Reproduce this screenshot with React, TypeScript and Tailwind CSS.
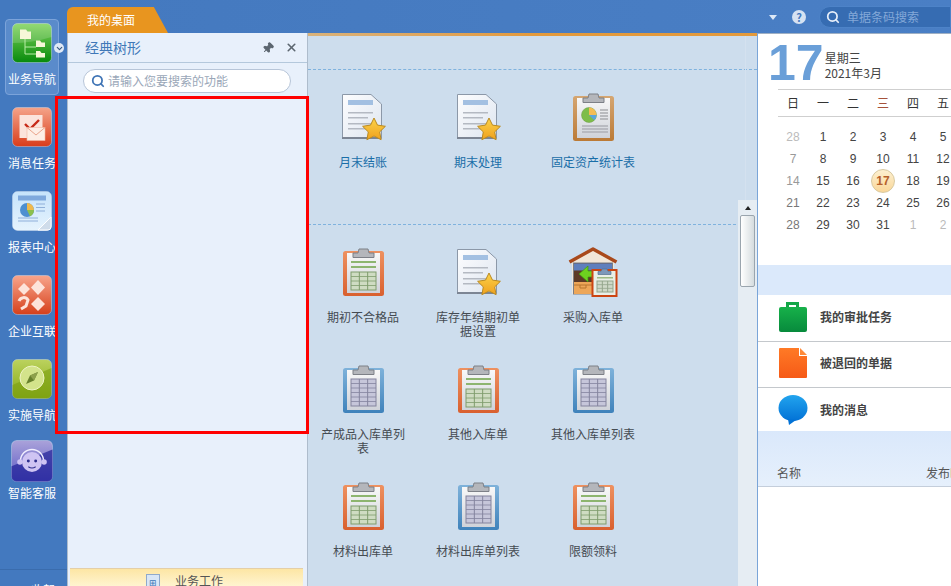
import React from 'react';
import { ChevronDown, Pin, Search, X } from 'lucide-react';

const FONT = '"Noto Sans CJK SC", "Liberation Sans", sans-serif';

type ClipKind = 'blue' | 'orange' | 'tan';

// Star in the corner of the document icons
const Star = ({ cx, cy, r, id }: { cx: number; cy: number; r: number; id: string }) => {
  const points = Array.from({ length: 10 }, (_, i) => {
    const a = (Math.PI / 5) * i - Math.PI / 2;
    const rr = i % 2 === 0 ? r : r * 0.5;
    return `${(cx + rr * Math.cos(a)).toFixed(1)},${(cy + rr * Math.sin(a)).toFixed(1)}`;
  }).join(' ');
  return (
    <>
      <defs>
        <linearGradient id={id} x1="0" y1="0" x2="0" y2="1">
          <stop offset="0" stopColor="#fbd34a" />
          <stop offset="1" stopColor="#f0a11e" />
        </linearGradient>
      </defs>
      <polygon points={points} fill={`url(#${id})`} stroke="#b98a22" strokeWidth="1" strokeLinejoin="round" />
    </>
  );
};

const DocIcon = () => (
  <svg width="48" height="48" viewBox="0 0 48 48">
    <defs>
      <linearGradient id="doc-paper" x1="0" y1="0" x2="1" y2="1">
        <stop offset="0" stopColor="#fdfdfe" />
        <stop offset="1" stopColor="#dde5f0" />
      </linearGradient>
    </defs>
    <path d="M3.5 1.5H32L42.5 11V45.5H3.5Z" fill="url(#doc-paper)" stroke="#8c98a8" />
    <rect x="3" y="44" width="36" height="2" fill="#7c8594" />
    <rect x="9" y="7" width="25" height="5" fill="#a3c0e2" />
    <rect x="9" y="19" width="25" height="1.5" fill="#b4b9c2" />
    <rect x="9" y="24" width="20" height="1.5" fill="#b4b9c2" />
    <rect x="9" y="30" width="25" height="1.5" fill="#b4b9c2" />
    <rect x="9" y="35" width="18" height="1.5" fill="#b4b9c2" />
    <Star cx={35} cy={37} r={12} id="doc-star" />
  </svg>
);

const ClipTable = ({ x, y, w, h, fill, line, rows }: { x: number; y: number; w: number; h: number; fill: string; line: string; rows: number }) => (
  <g>
    <rect x={x} y={y} width={w} height={h} fill={fill} stroke={line} />
    <path d={`M${x + w / 3} ${y}V${y + h}M${x + (2 * w) / 3} ${y}V${y + h}`} stroke={line} />
    {Array.from({ length: rows - 1 }, (_, i) => (
      <path key={i} d={`M${x} ${y + (h / rows) * (i + 1)}H${x + w}`} stroke={line} strokeWidth="0.8" />
    ))}
  </g>
);

const ClipboardIcon = ({ kind }: { kind: ClipKind }) => {
  const colors: Record<ClipKind, [string, string]> = {
    blue: ['#7fb2da', '#3f82bb'],
    orange: ['#ee9160', '#d9602f'],
    tan: ['#d5a672', '#bb7a36'],
  };
  const id = `clip-${kind}`;
  return (
    <svg width="48" height="48" viewBox="0 0 48 48">
      <defs>
        <linearGradient id={id} x1="0" y1="0" x2="0" y2="1">
          <stop offset="0" stopColor={colors[kind][0]} />
          <stop offset="1" stopColor={colors[kind][1]} />
        </linearGradient>
        <linearGradient id="clip-paper" x1="0" y1="0" x2="0" y2="1">
          <stop offset="0" stopColor="#f8f8f8" />
          <stop offset="1" stopColor="#cfd2d9" />
        </linearGradient>
      </defs>
      <rect x="4" y="3" width="41" height="45" rx="2.5" fill={`url(#${id})`} />
      <rect x="8" y="5" width="33" height="40" fill="url(#clip-paper)" />
      <path d="M14 9.5V5H19L20 1H29L30 5H35V9.5Z" fill="#b4b6bb" stroke="#7d8087" />
      {kind === 'blue' && <ClipTable x={12} y={14} w={25} h={27} fill="#c6c6da" line="#84849e" rows={6} />}
      {kind === 'orange' && (
        <>
          <rect x="12" y="13" width="25" height="2" fill="#8db56f" />
          <rect x="12" y="18" width="25" height="2" fill="#8db56f" />
          <ClipTable x={12} y={24} w={25} h={18} fill="#cfdcc2" line="#7f9c6c" rows={4} />
        </>
      )}
      {kind === 'tan' && (
        <>
          <circle cx="20" cy="22" r="7.5" fill="#7ebd4a" stroke="#6a9a44" strokeWidth="0.5" />
          <path d="M20 22V14.5A7.5 7.5 0 0 1 27.5 22Z" fill="#f3bd55" />
          <path d="M20 22H27.5A7.5 7.5 0 0 1 25.3 27.3Z" fill="#5aa6dc" />
          <path d="M31 17H39M31 20H39M31 23H39M31 26H39" stroke="#8b8d92" strokeWidth="1.2" />
          <path d="M13 33H39M13 36H39M13 39H39" stroke="#aeb0b7" strokeWidth="1.4" />
        </>
      )}
    </svg>
  );
};

const HouseIcon = () => (
  <svg width="50" height="50" viewBox="0 0 50 50">
    <path d="M4 15L25 3L46 15V47H4Z" fill="#f1e6d8" />
    <path d="M1.5 15L25 2L48.5 15" fill="none" stroke="#a9491b" strokeWidth="3.4" strokeLinejoin="round" />
    <rect x="5.5" y="16" width="39" height="31" fill="#5d3a26" stroke="#7d7f84" />
    <rect x="6" y="16.5" width="38" height="7" fill="#5f7fbd" />
    <rect x="6" y="35" width="18" height="12" fill="#eda658" />
    <path d="M6 38H24M12 38V41H18V38" stroke="#b8752f" fill="none" />
    <path d="M11 27L20 19V24H28V30H20V35Z" fill="#6ed21f" stroke="#3d9a12" strokeWidth="0.7" />
    <rect x="24.5" y="23" width="24" height="26" fill="#e9efe7" stroke="#cc4512" strokeWidth="2" />
    <path d="M30 27.5V24.5H33L34 22H39L40 24.5H43V27.5Z" fill="#7c98ba" stroke="#55708f" strokeWidth="0.7" />
    <rect x="29" y="30" width="16" height="1.5" fill="#9cba84" />
    <ClipTable x={29} y={34} w={16} h={11} fill="#cfd9c8" line="#93a58b" rows={3} />
  </svg>
);

// The six launcher icons on the blue rail
const RailTile = ({ id, from, to, size = 40, children }: { id: string; from: string; to: string; size?: number; children: React.ReactNode }) => (
  <svg width={size} height={size} viewBox="0 0 40 40">
    <defs>
      <linearGradient id={id} x1="0" y1="0" x2="0" y2="1">
        <stop offset="0" stopColor={from} />
        <stop offset="1" stopColor={to} />
      </linearGradient>
    </defs>
    <rect x="0.5" y="0.5" width="39" height="39" rx="5" fill={`url(#${id})`} stroke="#d7e3f2" strokeOpacity="0.4" />
    {children}
  </svg>
);

const TreeIcon = () => (
  <RailTile id="rail-tree" from="#7fd35a" to="#078a0c">
    <path d="M0.5 5A5 5 0 0 1 5 .5H35A5 5 0 0 1 39.5 5V14C26 18 14 20 .5 20Z" fill="#ffffff" opacity="0.16" />
    <path d="M8 6.5H14L15.5 8.5H19V16H8Z" fill="#f6f7d8" />
    <path d="M13 16V31H24M13 24H24" stroke="#b9eda6" strokeWidth="1" fill="none" />
    <path d="M24 17.5H28L29.5 19.5H33V24H24Z" fill="#f6f7d8" />
    <path d="M24 28H28L29.5 30H33V34.5H24Z" fill="#f6f7d8" />
  </RailTile>
);

const MessageIcon = () => (
  <RailTile id="rail-msg" from="#f5a48a" to="#d93c1a">
    <rect x="7.5" y="8" width="23" height="23" fill="#fbe4dc" />
    <path d="M13 17L18 22L27 13" stroke="#c72a18" strokeWidth="2.4" fill="none" />
    <rect x="15" y="20.5" width="18" height="13" fill="#fdeee6" stroke="#f1b7a2" strokeWidth="0.6" />
    <path d="M15 20.5L24 28L33 20.5" stroke="#e9a48c" fill="none" />
  </RailTile>
);

const ReportIcon = () => (
  <RailTile id="rail-report" from="#c6e3fb" to="#e6f3fd">
    <rect x="6" y="4.5" width="28" height="5" fill="#7fa9dd" />
    <circle cx="15" cy="19" r="7" fill="#4d8fd0" />
    <path d="M15 19V12A7 7 0 0 1 22 19Z" fill="#f0b94c" />
    <path d="M15 19H22A7 7 0 0 1 18 25.3Z" fill="#8cc04d" />
    <path d="M24 13H33M24 16.5H33M24 20H33M6 27H26M6 30H26" stroke="#8fb0d9" strokeWidth="1.2" />
    <path d="M26 39L39 26V36A3 3 0 0 1 36 39Z" fill="#cfdcea" stroke="#fff" />
  </RailTile>
);

const LinkIcon = () => (
  <RailTile id="rail-link" from="#f8a58c" to="#d6401b">
    <path d="M12 8L18 14L12 20L6 14Z" fill="#fde3da" />
    <path d="M26 5L33 12.5L26 20L19 12.5Z" fill="#fde3da" />
    <path d="M26 22L33 29L26 36L19 29Z" fill="#fde3da" />
    <path d="M7 26A5 5 0 0 1 16 25L14 31L9 34" stroke="#fde3da" strokeWidth="3" fill="none" />
  </RailTile>
);

const CompassIcon = () => (
  <RailTile id="rail-compass" from="#bcd25e" to="#84a912">
    <path d="M.5 26L39.5 9V35A4.5 4.5 0 0 1 35 39.5H5A4.5 4.5 0 0 1 .5 35Z" fill="#7c9f10" opacity="0.6" />
    <circle cx="20" cy="19" r="12" fill="#d3e38b" stroke="#eef4c4" />
    <path d="M26 13L22 21.5L14 25L18 16.5Z" fill="#667f2b" />
    <path d="M26 13L18 16.5L22 21.5Z" fill="#8da04c" />
  </RailTile>
);

const ServiceIcon = () => (
  <RailTile id="rail-service" from="#aaa2da" to="#5a58c4" size={42}>
    <path d="M.5 25L39.5 9V35A4.5 4.5 0 0 1 35 39.5H5A4.5 4.5 0 0 1 .5 35Z" fill="#1f1f97" opacity="0.7" />
    <path d="M9 20A11 11 0 0 1 31 20" stroke="#f1efff" strokeWidth="1.4" fill="none" />
    <circle cx="20" cy="21" r="9.5" fill="#cfc4f3" />
    <circle cx="8.5" cy="21" r="2.6" fill="#cfc4f3" />
    <circle cx="31.5" cy="21" r="2.6" fill="#cfc4f3" />
    <circle cx="16.5" cy="20" r="1.4" fill="#2f2f8d" />
    <circle cx="23.5" cy="20" r="1.4" fill="#2f2f8d" />
    <path d="M16.5 25.5Q20 28 23.5 25.5" stroke="#2f2f8d" fill="none" />
  </RailTile>
);

const railItems = [
  { label: '消息任务', icon: <MessageIcon /> },
  { label: '报表中心', icon: <ReportIcon /> },
  { label: '企业互联', icon: <LinkIcon /> },
  { label: '实施导航', icon: <CompassIcon /> },
];

const Rail = () => (
  <div className="relative flex h-full w-[67px] shrink-0 flex-col bg-[#4379bf] pt-[19px] text-white">
    {/* 当前选中 */}
    <div className="mb-[8px] ml-[5px] flex h-[76px] w-[54px] flex-col items-center rounded border border-[#7ba3da] bg-[#5a8bcb] pt-[3px]">
      <TreeIcon />
      <span className="mt-[9px] text-[12px] leading-[14px] whitespace-nowrap">业务导航</span>
    </div>
    {railItems.map((item) => (
      <div key={item.label} className="mb-[8px] ml-[5px] flex h-[76px] w-[54px] flex-col items-center pt-[4px]">
        {item.icon}
        <span className="mt-[9px] text-[12px] leading-[14px] whitespace-nowrap">{item.label}</span>
      </div>
    ))}
    <div className="-mt-[3px] ml-[5px] flex w-[54px] flex-col items-center pt-[4px]">
      <ServiceIcon />
      <span className="mt-[4px] text-[12px] leading-[14px] whitespace-nowrap">智能客服</span>
    </div>
    <span className="absolute top-[43px] left-[54px] flex h-[10px] w-[10px] items-center justify-center rounded-full bg-[#dfe9f6]">
      <ChevronDown size={9} strokeWidth={3} className="text-[#35587f]" />
    </span>
    <div className="mt-auto flex h-[17px] gap-[10px] overflow-hidden border-t border-[#3a6cad] pt-[13px] pl-[11px] text-[12px] leading-[14px]">
      <span>✦</span>
      <span>收起</span>
    </div>
  </div>
);

const TopBar = () => (
  <div className="flex h-[33px] shrink-0 bg-gradient-to-r from-[#4479bf] to-[#4a7fc5]">
    <div className="mt-[7px] flex h-[26px] w-[101px] items-center rounded-tl-[6px] bg-[#e8951f] pl-[20px] text-[12px] text-white [clip-path:polygon(0_0,86%_0,100%_100%,0_100%)]">
      我的桌面
    </div>
    <div className="ml-auto flex items-start">
      <span className="mt-[15px] h-0 w-0 border-x-[4px] border-t-[5px] border-x-transparent border-t-[#dce8f7]" />
      <span className="mt-[10px] ml-[15px] flex h-[14px] w-[14px] items-center justify-center rounded-full bg-[#d6e2f2] text-[11px] leading-none font-bold text-[#4479bf]">?</span>
      <div className="mt-[6px] ml-[13px] flex h-[22px] w-[132px] items-center rounded-l-full border border-[#4d83c8] bg-[#366cb2] pl-[6px]">
        <Search size={14} strokeWidth={3} className="text-[#e6eef9]" />
        <span className="ml-[7px] text-[12px] whitespace-nowrap text-[#83a8d8]">单据条码搜索</span>
      </div>
    </div>
  </div>
);

const TreePanel = () => (
  <div className="flex w-[241px] shrink-0 flex-col border-x border-[#aebccc] bg-[#e8f0fb]">
    <div className="flex h-[30px] shrink-0 items-center border-b border-[#b4c8dc] pl-[17px]">
      <span className="text-[14px] text-[#3f78b8]">经典树形</span>
      <Pin size={12} fill="#5c6670" className="ml-auto rotate-45 text-[#5c6670]" />
      <X size={13} strokeWidth={3} className="mr-[9px] ml-[11px] text-[#5c6670]" />
    </div>
    <div className="mt-[6px] ml-[15px] flex h-[24px] w-[208px] items-center rounded-full border border-[#b7c5d8] bg-white pl-[7px]">
      <Search size={14} strokeWidth={3} className="text-[#3f74b5]" />
      <span className="ml-[3px] text-[12px] text-[#9aa7b8]">请输入您要搜索的功能</span>
    </div>
    <div className="mt-auto mr-[4px] ml-[2px] flex h-[18px] overflow-hidden border-t border-[#e4cfa8] bg-gradient-to-b from-[#fde6a4] to-[#fff4cf] pt-[5px] pl-[76px]">
      <span className="flex h-[16px] w-[14px] shrink-0 items-center justify-center border border-[#8fa9cb] bg-[#d8e6f6] text-[9px] leading-none text-[#3f78b8]">⊞</span>
      <span className="ml-[15px] text-[12px] leading-[14px] text-[#555]">业务工作</span>
    </div>
  </div>
);

const firstRow: { label: string; icon: React.ReactNode }[] = [
  { label: '月末结账', icon: <DocIcon /> },
  { label: '期末处理', icon: <DocIcon /> },
  { label: '固定资产统计表', icon: <ClipboardIcon kind="tan" /> },
];

const stockRows: { label: string; icon: React.ReactNode }[] = [
  { label: '期初不合格品', icon: <ClipboardIcon kind="orange" /> },
  { label: '库存年结期初单据设置', icon: <DocIcon /> },
  { label: '采购入库单', icon: <HouseIcon /> },
  { label: '产成品入库单列表', icon: <ClipboardIcon kind="blue" /> },
  { label: '其他入库单', icon: <ClipboardIcon kind="orange" /> },
  { label: '其他入库单列表', icon: <ClipboardIcon kind="blue" /> },
  { label: '材料出库单', icon: <ClipboardIcon kind="orange" /> },
  { label: '材料出库单列表', icon: <ClipboardIcon kind="blue" /> },
  { label: '限额领料', icon: <ClipboardIcon kind="orange" /> },
];

const Tile = ({ label, icon, tone }: { label: string; icon: React.ReactNode; tone: string }) => (
  <div className="flex h-[117px] flex-col items-center">
    <div className="flex h-[48px] items-center justify-center">{icon}</div>
    <span className={`mt-[14px] text-center text-[12px] leading-[14px] ${tone}`}>{label}</span>
  </div>
);

const MainArea = () => (
  <div className="relative flex-1 overflow-hidden border-r border-[#7aa5d8] bg-[#cddded]">
    <div className="h-[3px] bg-gradient-to-r from-[#d9b27a] via-[#e39a3c] to-[#e39a3c]" />
    <div className="absolute top-[3px] right-0 h-[164px] w-[12px] border-l border-[#d4e1ef]" />
    <div className="mt-[33px] h-[155px] border-t border-dashed border-[#7fb2de] pt-[23px] pr-[2px]">
      <div className="grid grid-cols-[repeat(3,90px)] gap-x-[25px] pl-[10px]">
        {firstRow.map((t) => (
          <Tile key={t.label} label={t.label} icon={t.icon} tone="text-[#1a6ea8]" />
        ))}
      </div>
    </div>
    <div className="mr-[21px] border-t border-dashed border-[#7fb2de] pt-[23px]">
      <div className="grid grid-cols-[repeat(3,90px)] gap-x-[25px] pl-[10px]">
        {stockRows.map((t) => (
          <Tile key={t.label} label={t.label} icon={t.icon} tone="text-[#454b52]" />
        ))}
      </div>
    </div>
    {/* 滚动条 */}
    <div className="absolute top-[167px] right-0 bottom-0 flex w-[19px] flex-col items-center bg-[#e6edf3] pt-[6px]">
      <span className="h-0 w-0 border-x-[3px] border-b-[4px] border-x-transparent border-b-[#222]" />
      <div className="mt-[5px] h-[72px] w-[15px] rounded-[2px] border border-[#9aa5ae] bg-gradient-to-r from-white to-[#d5dcdf]" />
    </div>
  </div>
);

const weekdays = ['日', '一', '二', '三', '四', '五', '六'];
const days: { n: number; tone: string }[] = [
  { n: 28, tone: 'text-[#bbb]' }, ...[1, 2, 3, 4, 5, 6].map((n) => ({ n, tone: 'text-[#444]' })),
  { n: 7, tone: 'text-[#999]' }, ...[8, 9, 10, 11, 12, 13].map((n) => ({ n, tone: 'text-[#444]' })),
  { n: 14, tone: 'text-[#999]' }, ...[15, 16, 17, 18, 19, 20].map((n) => ({ n, tone: 'text-[#444]' })),
  { n: 21, tone: 'text-[#777]' }, ...[22, 23, 24, 25, 26, 27].map((n) => ({ n, tone: 'text-[#444]' })),
  { n: 28, tone: 'text-[#777]' }, ...[29, 30, 31].map((n) => ({ n, tone: 'text-[#444]' })),
  { n: 1, tone: 'text-[#bbb]' }, { n: 2, tone: 'text-[#bbb]' }, { n: 3, tone: 'text-[#bbb]' },
];

const CalendarPanel = () => (
  <div className="h-[232px] shrink-0 overflow-hidden border-t border-[#9fb0c4]">
    <div className="flex h-[55px] pl-[10px]">
      <span className="pt-[4px] text-[50px] leading-none font-bold text-[#6a9fd8] [font-family:'Liberation_Sans',sans-serif]">17</span>
      <div className="ml-[1px] flex flex-col pt-[16px] text-[12px] leading-[15px] text-[#444]">
        <span>星期三</span>
        <span>2021年3月</span>
      </div>
    </div>
    <div className="ml-[20px] w-[210px] border-y border-[#cfcfcf]">
      <div className="grid h-[26px] grid-cols-[repeat(7,30px)] items-center text-center text-[12px] text-[#333]">
        {weekdays.map((d) => (
          <span key={d} className={d === '三' ? 'text-[#a5523a]' : ''}>{d}</span>
        ))}
      </div>
    </div>
    <div className="mt-[9px] ml-[20px] grid w-[210px] grid-cols-[repeat(7,30px)] grid-rows-[repeat(5,22px)] items-center justify-items-center text-[12px] [font-family:'Liberation_Sans',sans-serif]">
      {days.map((d, i) =>
        d.n === 17 && i === 17 ? (
          <span key={i} className="flex h-[24px] w-[24px] items-center justify-center rounded-full border border-[#d8c9a0] bg-gradient-to-b from-[#fdf0d0] to-[#f9d79a] font-bold text-[#b5602a]">17</span>
        ) : (
          <span key={i} className={d.tone}>{d.n}</span>
        ),
      )}
    </div>
  </div>
);

const BagIcon = () => (
  <svg width="30" height="32" viewBox="0 0 30 32">
    <defs>
      <linearGradient id="bag-fill" x1="0" y1="0" x2="0" y2="1">
        <stop offset="0" stopColor="#17b14a" />
        <stop offset="1" stopColor="#078a3c" />
      </linearGradient>
    </defs>
    <path d="M8 7V1H21V7H18V4H11V7Z" fill="#13a648" />
    <rect x="1" y="6" width="28" height="25" rx="2" fill="url(#bag-fill)" />
  </svg>
);

const SheetIcon = () => (
  <svg width="30" height="32" viewBox="0 0 30 32">
    <defs>
      <linearGradient id="sheet-fill" x1="0" y1="0" x2="0" y2="1">
        <stop offset="0" stopColor="#ff7a26" />
        <stop offset="1" stopColor="#f65a17" />
      </linearGradient>
    </defs>
    <path d="M1 2A1 1 0 0 1 2 1H21V9H29V30A1 1 0 0 1 28 31H2A1 1 0 0 1 1 30Z" fill="url(#sheet-fill)" />
    <path d="M22 1L29 8H22Z" fill="#ff8a3a" />
  </svg>
);

const BubbleIcon = () => (
  <svg width="30" height="32" viewBox="0 0 30 32">
    <defs>
      <linearGradient id="bubble-fill" x1="0" y1="0" x2="0" y2="1">
        <stop offset="0" stopColor="#22a4ee" />
        <stop offset="1" stopColor="#0272d6" />
      </linearGradient>
    </defs>
    <ellipse cx="15" cy="14" rx="14.5" ry="13" fill="url(#bubble-fill)" />
    <path d="M10 25L11 31L18 26Z" fill="#0272d6" />
  </svg>
);

const TaskRow = ({ label, icon, className }: { label: string; icon: React.ReactNode; className: string }) => (
  <div className={`flex shrink-0 items-center pl-[20px] ${className}`}>
    {icon}
    <span className="ml-[12px] text-[12px] font-bold text-[#444]">{label}</span>
  </div>
);

const RightPanel = () => (
  <div className="flex w-[193px] shrink-0 flex-col overflow-hidden bg-white">
    <CalendarPanel />
    <div className="h-[30px] shrink-0 bg-[#dbe9fb]" />
    <TaskRow label="我的审批任务" icon={<BagIcon />} className="h-[47px] border-b border-[#c4c8cc] pb-[3px]" />
    <TaskRow label="被退回的单据" icon={<SheetIcon />} className="h-[46px] border-b border-[#c4c8cc] pb-[3px]" />
    <TaskRow label="我的消息" icon={<BubbleIcon />} className="h-[43px]" />
    <div className="flex h-[56px] shrink-0 items-end justify-between border-b border-[#c4cedb] bg-gradient-to-b from-[#dae8fb] to-[#e6f0fc] pb-[6px] pl-[19px] text-[12px] leading-[14px] text-[#555]">
      <span>名称</span>
      <span className="w-[25px] overflow-hidden whitespace-nowrap">发布时间</span>
    </div>
  </div>
);

export default function App() {
  return (
    <div className="relative flex h-[586px] w-[951px] overflow-hidden bg-[#4379bf]" style={{ fontFamily: FONT }}>
      <Rail />
      <div className="flex min-w-0 flex-1 flex-col">
        <TopBar />
        <div className="flex min-h-0 flex-1">
          <TreePanel />
          <MainArea />
          <RightPanel />
        </div>
      </div>
      {/* 红色标注框 */}
      <div className="pointer-events-none absolute top-[96px] left-[55px] h-[338px] w-[254px] border-[3px] border-[#ff0000]" />
    </div>
  );
}
